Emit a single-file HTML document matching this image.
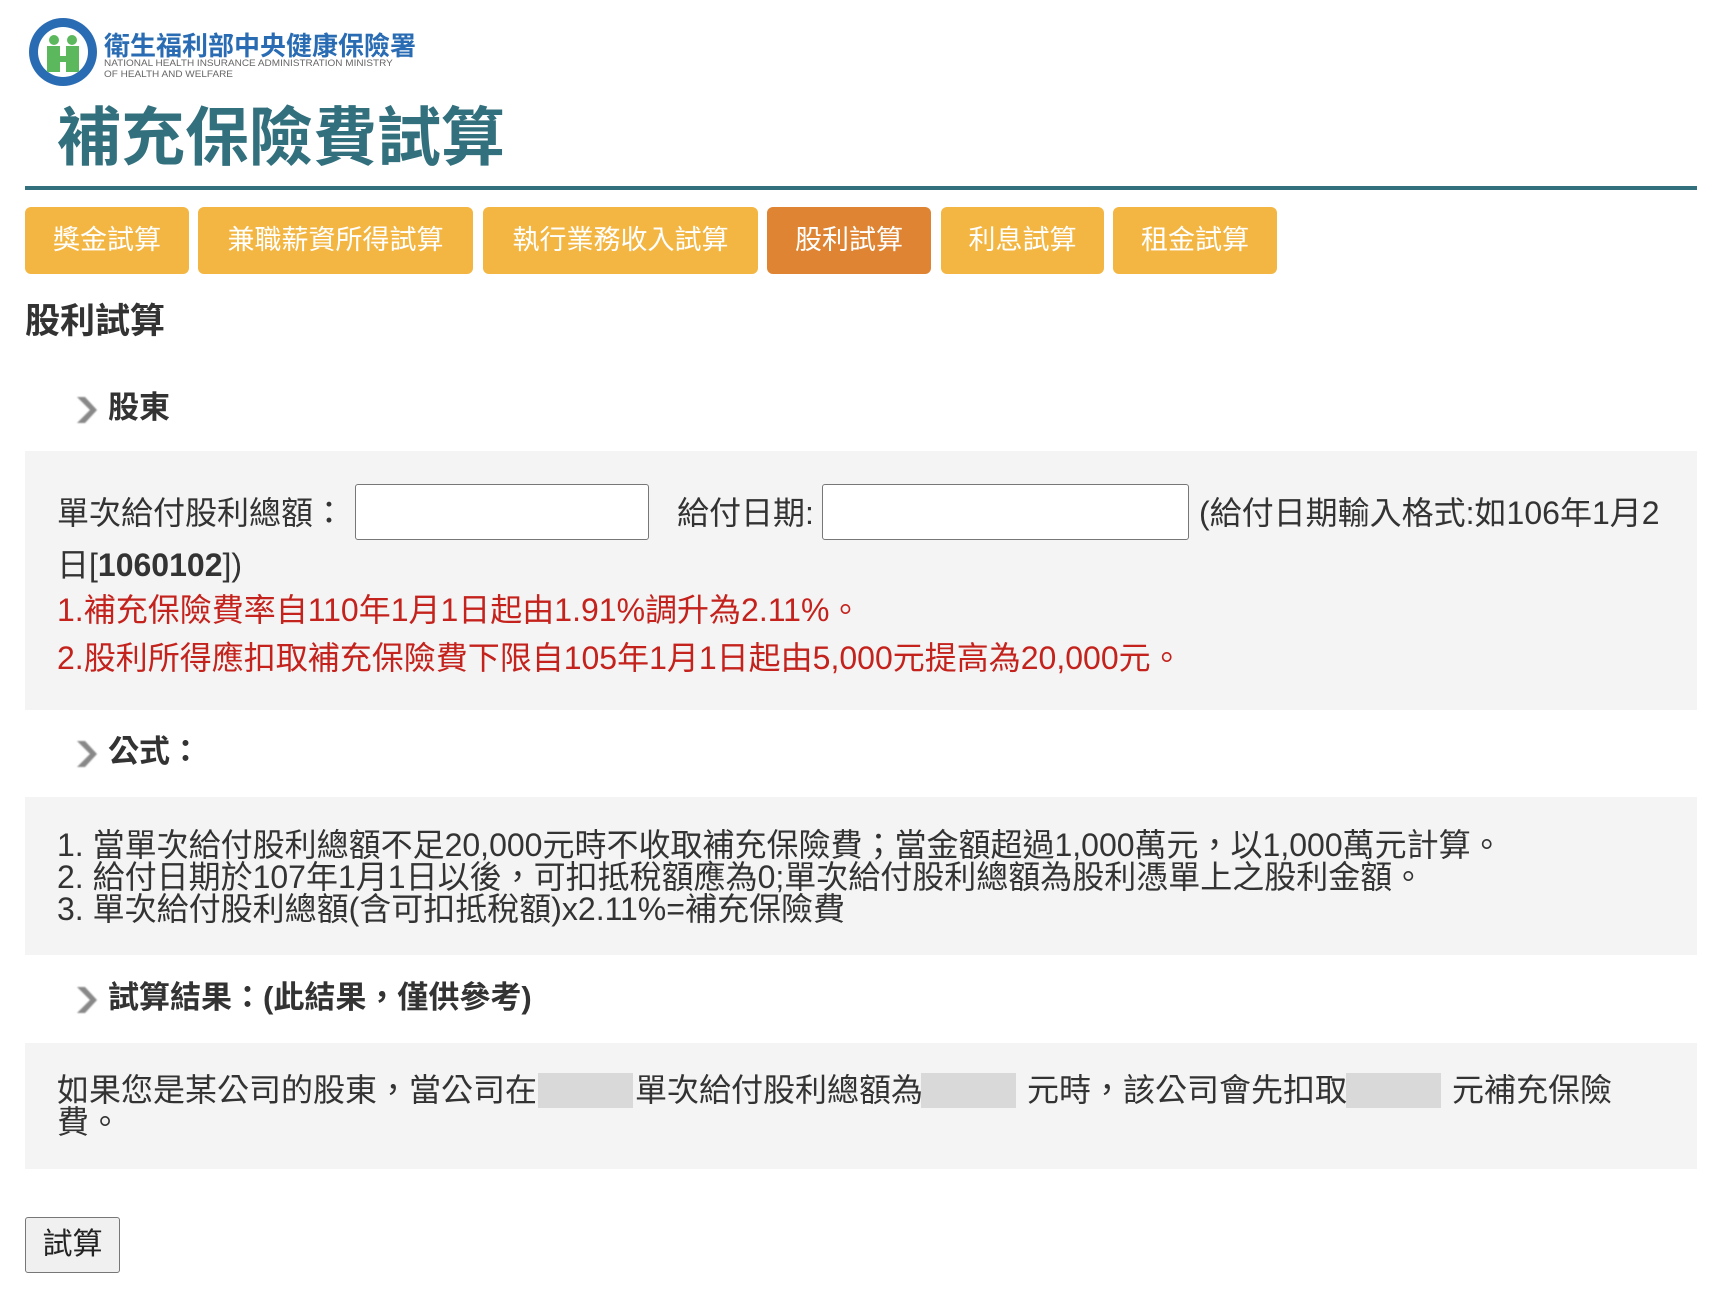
<!DOCTYPE html>
<html><head><meta charset="utf-8">
<style>
*{margin:0;padding:0;box-sizing:border-box}
body{width:1722px;height:1298px;background:#fff;font-family:"Liberation Sans","Noto Sans CJK TC",sans-serif;color:#333;position:relative;overflow:hidden}
.a{position:absolute;white-space:nowrap}
.tab{position:absolute;top:207px;height:67px;background:#f3b643;color:#fff;border-radius:6px;font-size:27px;line-height:67px;text-align:center}
.panel{position:absolute;left:25px;width:1672px;background:#f4f4f4}
.h{position:absolute;left:108px;font-size:31px;font-weight:bold;color:#333;line-height:36px}
.arr{position:absolute;left:74px;width:24px;height:32px;filter:blur(0.8px)}
.t{font-size:32px;color:#333}
.red{color:#c4221c}
.in{position:absolute;background:#fff;border:1px solid #777;border-radius:3px}
.g{position:absolute;background:#d9d9d9;width:95px;height:35px}
</style></head><body>
<svg class="a" style="left:27px;top:16px" width="72" height="72" viewBox="0 0 72 72">
<circle cx="36" cy="36" r="34" fill="#2a6cb3"/><circle cx="36" cy="36" r="25" fill="#fff"/>
<circle cx="27" cy="24" r="5" fill="#5cb85c"/><circle cx="45" cy="24" r="5" fill="#5cb85c"/>
<path d="M20 30h13v10h6V30h13v26H39V46h-6v10H20z" fill="#5cb85c"/>
</svg>
<div class="a" style="left:104px;top:26px;font-size:26px;font-weight:bold;color:#2a6cb3">衛生福利部中央健康保險署</div>
<div class="a" style="left:104px;top:58px;font-size:9.5px;color:#666;line-height:11px;transform:scaleX(1.05);transform-origin:left">NATIONAL HEALTH INSURANCE ADMINISTRATION MINISTRY<br>OF HEALTH AND WELFARE</div>
<div class="a" style="left:57px;top:100px;font-size:64px;font-weight:bold;color:#33707e;line-height:76px">補充保險費試算</div>
<div class="a" style="left:25px;top:186px;width:1672px;height:4px;background:#33707e"></div>
<div class="tab" style="left:25px;width:164px">獎金試算</div>
<div class="tab" style="left:198px;width:275px">兼職薪資所得試算</div>
<div class="tab" style="left:483px;width:275px">執行業務收入試算</div>
<div class="tab" style="left:767px;width:164px;background:#de8433">股利試算</div>
<div class="tab" style="left:941px;width:163px">利息試算</div>
<div class="tab" style="left:1113px;width:164px">租金試算</div>
<div class="a" style="left:25px;top:302px;font-size:35px;font-weight:bold;line-height:40px">股利試算</div>

<svg class="arr" style="top:394px" viewBox="0 0 24 32"><path d="M3 3l13 13-13 13h8l12-13L11 3z" fill="#888"/></svg>
<div class="h" style="top:390px">股東</div>
<div class="panel" style="top:451px;height:259px"></div>
<div class="a t" style="left:57px;top:494px;line-height:38px">單次給付股利總額：</div>
<div class="in" style="left:355px;top:484px;width:294px;height:56px"></div>
<div class="a t" style="left:677px;top:494px;line-height:38px">給付日期:</div>
<div class="in" style="left:822px;top:484px;width:367px;height:56px"></div>
<div class="a t" style="left:1199px;top:494px;line-height:38px">(給付日期輸入格式:如106年1月2</div>
<div class="a t" style="left:57px;top:546px;line-height:38px">日[<b>1060102</b>])</div>
<div class="a t red" style="left:57px;top:591px;line-height:38px">1.補充保險費率自110年1月1日起由1.91%調升為2.11%。</div>
<div class="a t red" style="left:57px;top:639px;line-height:38px">2.股利所得應扣取補充保險費下限自105年1月1日起由5,000元提高為20,000元。</div>

<svg class="arr" style="top:738px" viewBox="0 0 24 32"><path d="M3 3l13 13-13 13h8l12-13L11 3z" fill="#888"/></svg>
<div class="h" style="top:734px">公式：</div>
<div class="panel" style="top:797px;height:158px"></div>
<div class="a t" style="left:57px;top:829px;line-height:32px">1. 當單次給付股利總額不足20,000元時不收取補充保險費；當金額超過1,000萬元，以1,000萬元計算。<br>2. 給付日期於107年1月1日以後，可扣抵稅額應為0;單次給付股利總額為股利憑單上之股利金額。<br>3. 單次給付股利總額(含可扣抵稅額)x2.11%=補充保險費</div>

<svg class="arr" style="top:984px" viewBox="0 0 24 32"><path d="M3 3l13 13-13 13h8l12-13L11 3z" fill="#888"/></svg>
<div class="h" style="top:980px">試算結果：(此結果，僅供參考)</div>
<div class="panel" style="top:1043px;height:126px"></div>
<div class="g" style="left:538px;top:1073px"></div>
<div class="g" style="left:921px;top:1073px"></div>
<div class="g" style="left:1346px;top:1073px"></div>
<div class="a t" style="left:57px;top:1074px;line-height:32px">如果您是某公司的股東，當公司在</div>
<div class="a t" style="left:635px;top:1074px;line-height:32px">單次給付股利總額為</div>
<div class="a t" style="left:1027px;top:1074px;line-height:32px">元時，該公司會先扣取</div>
<div class="a t" style="left:1452px;top:1074px;line-height:32px">元補充保險</div>
<div class="a t" style="left:57px;top:1106px;line-height:32px">費。</div>

<div class="a" style="left:25px;top:1217px;width:95px;height:56px;border:1px solid #777;border-radius:3px;background:#f0f0f0;font-size:30px;line-height:54px;text-align:center;color:#222">試算</div>
</body></html>
